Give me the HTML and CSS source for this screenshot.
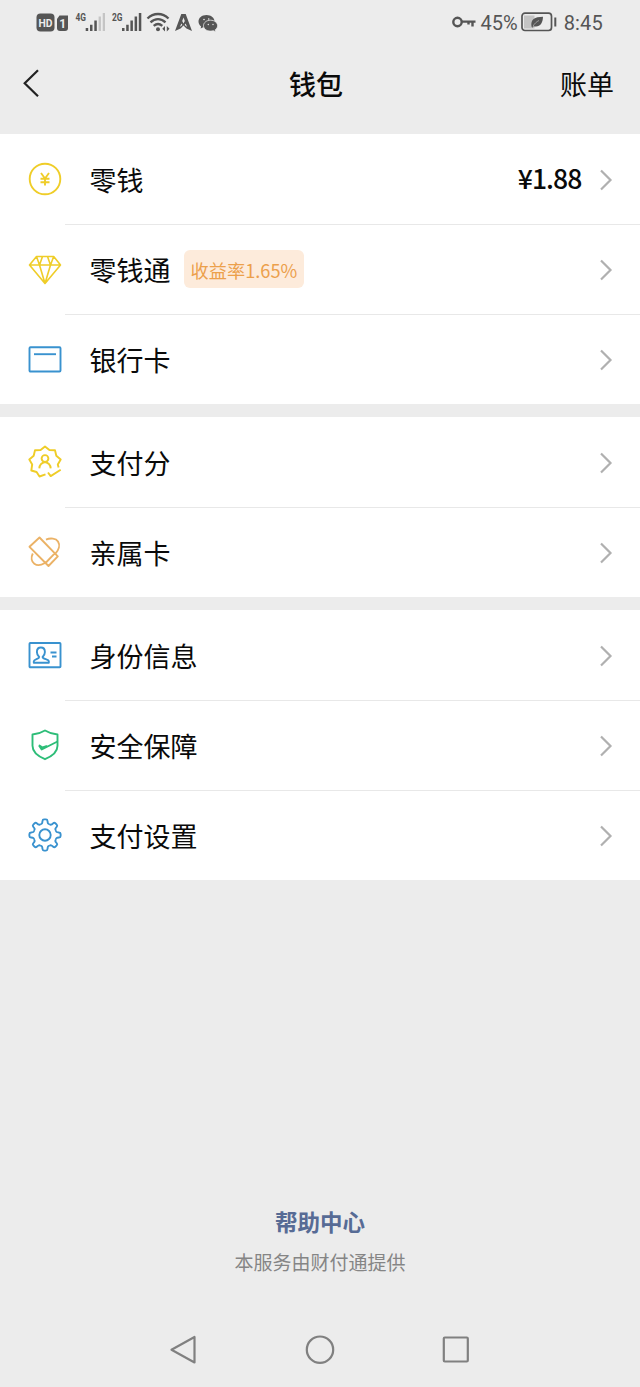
FILE: index.html
```html
<!DOCTYPE html>
<html lang="zh-CN">
<head>
<meta charset="utf-8">
<title>钱包</title>
<link rel="stylesheet" href="styles.css">
</head>
<body>
<svg class="defs" width="0" height="0">
  <symbol id="chevron" viewBox="0 0 14 22"><path d="M2 1.500 11.500 11 2 20.500" fill="none" stroke="#b0b0b0" stroke-width="2.200"/></symbol>
</svg>
<div class="screen">
  <header class="status">
    <svg class="status-left" width="184" height="24" viewBox="36 10 184 24" fill="#555">
      <rect x="36.500" y="13.500" width="18" height="18" rx="4"/>
      <text x="38.500" y="26.800" class="hd" textLength="14" lengthAdjust="spacingAndGlyphs">HD</text>
      <path d="M59.500 15.500h8.500v12.500a3 3 0 0 1-3 3h-5a3 3 0 0 1-3-3v-9z"/>
      <text x="59.300" y="27.800" class="sim">1</text>
      <text x="75.500" y="20.500" class="net" textLength="10.500" lengthAdjust="spacingAndGlyphs">4G</text>
      <path d="M85.700 28h2.500v3h-2.500zM90 24.800h2.500V31H90zM94.300 20.500h2.500V31h-2.500z"/>
      <path d="M98.600 16.500h2.300V31h-2.300zM102.700 13h2.300v18h-2.300z" fill="#c5c5c5"/>
      <text x="112" y="20.500" class="net" textLength="10.500" lengthAdjust="spacingAndGlyphs">2G</text>
      <path d="M122 28h2.500v3H122zM126.200 24.800h2.500V31h-2.500zM130.400 20.500h2.500V31h-2.500zM134.600 16.500h2.500V31h-2.500zM138.800 13h2.500v18h-2.500z"/>
      <g fill="none" stroke="#555" stroke-width="2.300"><path d="M147.500 18.500c6-6 15-6 21 0M150.500 22.300c4.500-4.300 10.500-4.300 15 0M153.700 25.800c2.700-2.300 6-2.300 8.600 0"/></g>
      <circle cx="158" cy="29.200" r="2"/>
      <path d="m165 26-2.700 2.800 2.700 2.800zM166.800 26l2.700 2.800-2.700 2.800z"/>
      <path d="M181.300 14h4.400L192 31l-5.500-2.500-3-3-3 3L175 31z"/>
      <path d="m183.500 17.500 1.300 3.500-1.300 2.500-1.300-2.500zM179.800 27l1.600-3.500 1 1.500zM187.200 27l-1.600-3.500-1 1.500z" fill="#ececec"/>
      <path d="M206.500 15c-4.700 0-8 2.900-8 6.500 0 2 1 3.700 2.600 4.900l-.5 2.200 2.600-1.300c1 .3 2 .5 3.300.5 4.700 0 8-2.900 8-6.400s-3.400-6.400-8-6.400z"/>
      <path d="M210.500 20.200c-4 0-7 2.500-7 5.500s3 5.400 7 5.400c1 0 2-.1 2.800-.4l2.500 1-.5-2c1.500-1 2.300-2.400 2.300-4 0-3-3-5.500-7.100-5.500z" stroke="#ececec" stroke-width=".8"/>
      <g fill="#ececec"><circle cx="204" cy="19.500" r=".8"/><circle cx="208.700" cy="19" r=".8"/><circle cx="208.300" cy="24.500" r=".7"/><circle cx="213" cy="24.500" r=".7"/></g>
    </svg>
    <div class="status-right">
      <svg width="24" height="14" viewBox="0 0 24 14" fill="none" stroke="#555" stroke-width="2.400"><circle cx="5.500" cy="7" r="4.200"/><path d="M9.700 6.600H23.500M20.500 6.600v4.900M16.500 6.600v3"/></svg>
      <span class="percent">45%</span>
      <svg class="battery" width="36" height="20" viewBox="0 0 36 20"><path d="M3 3.500h10.500v13H3z" fill="#c4c4c4"/><rect x="1" y="1.200" width="29.500" height="17.300" rx="3" fill="none" stroke="#555" stroke-width="1.700"/><path d="M33.300 5.500h2v9h-2z" fill="#555"/><path d="M10.500 14.500c-1-7 3-9.500 11.500-9.700-.3 7.400-3.500 10.800-9.500 9.400l-1.200 1.600z" fill="#555"/><path d="M12 14.300c1.500-2.800 3.500-4.600 6-5.800" fill="none" stroke="#ccc" stroke-width=".6"/></svg>
      <span class="time">8:45</span>
    </div>
  </header>
  <nav class="titlebar">
    <svg class="back" width="18" height="30" viewBox="0 0 18 30" fill="none" stroke="#222" stroke-width="2.200"><path d="M16 1.200 2.700 14.200l13.300 13"/></svg>
    <h1>钱包</h1>
    <span class="bill">账单</span>
  </nav>
  <main>
    <section class="group">
      <div class="row">
        <svg class="icon yellow" viewBox="0 0 34 34"><circle cx="17" cy="17" r="15.300"/><path d="m13 11 4 5.500 4-5.500M17 16.500v7M12.500 16.800h9M12.500 20.200h9"/></svg>
        <div class="cell"><span class="label">零钱</span><span class="amount">¥1.88</span><svg class="chevron"><use href="#chevron"/></svg></div>
      </div>
      <div class="row">
        <svg class="icon yellow thin" viewBox="0 0 34 34"><path d="M8.500 4.500h17.200L32.500 13 17 31.500 1.500 13zM1.500 13h31M11.500 13 17 31.500 22.500 13M8.500 4.500l3 8.500 3-8.500M19.500 4.500l3 8.500 3.200-8.500"/></svg>
        <div class="cell"><span class="label">零钱通</span><span class="tag">收益率1.65%</span><svg class="chevron"><use href="#chevron"/></svg></div>
      </div>
      <div class="row">
        <svg class="icon blue" viewBox="0 0 34 34"><rect x="1.500" y="5.300" width="31" height="24.200" rx="1"/><path d="M6 12.200h22"/></svg>
        <div class="cell"><span class="label">银行卡</span><svg class="chevron"><use href="#chevron"/></svg></div>
      </div>
    </section>
    <section class="group">
      <div class="row">
        <svg class="icon yellow" viewBox="0 0 34 34"><path d="M17.500 29.300 11.500 31.500 8.600 27 3.300 25.500 4.200 19.500 1.300 14.500 5.700 10.700 7 5.200 12.600 5 17 1.500 21.400 5 27 5.200 28.300 10.700 32.700 14.500 29.800 19.500 30.600 22.500M20 27.500l2.700 3.600 10-6.300"/><circle cx="17" cy="13.500" r="3.400"/><path d="M11.300 23.300c.3-3.500 2-5.500 5.700-6.300 3.700.8 5.400 2.800 5.700 6.300"/></svg>
        <div class="cell"><span class="label">支付分</span><svg class="chevron"><use href="#chevron"/></svg></div>
      </div>
      <div class="row">
        <svg class="icon orange" viewBox="0 0 34 34"><path d="M11.500 2.500 29.800 21.300 20.500 31 1.500 11.800zM17.500 28l9.500-9.800M18 4.600c4.500-2 10-1.300 12 1.800 2.400 3.700.8 8.700-2.800 12.500M4.800 18.500c-2 4-1.300 8.200 1.500 10.200 2.800 2 6.800 1.500 10.200-.5"/></svg>
        <div class="cell"><span class="label">亲属卡</span><svg class="chevron"><use href="#chevron"/></svg></div>
      </div>
    </section>
    <section class="group">
      <div class="row">
        <svg class="icon blue" viewBox="0 0 34 34"><rect x="1.500" y="5" width="31" height="24.200" rx=".8"/><path d="M5.800 24.800v-1.500c0-2.300 5.400-2 5.400-4.300-1.700-1.400-2.300-3.100-2.300-5 0-3 1.600-4.500 4-4.500s4 1.500 4 4.500c0 1.900-.6 3.600-2.300 5 0 2.300 6.200 2 6.200 4.300v1.500zM22.500 14.500h6M24 18.500h4.500"/></svg>
        <div class="cell"><span class="label">身份信息</span><svg class="chevron"><use href="#chevron"/></svg></div>
      </div>
      <div class="row">
        <svg class="icon green" viewBox="0 0 34 34"><path d="M17 2.500c4 2.500 8 3.600 12.500 4v11.300c0 6-5.500 10.500-12.500 13.400C10 28.300 4.500 23.800 4.500 17.800V6.500C9 6.100 13 5 17 2.500z"/><path d="m11 17.500 2.700 4L29.500 13.500M11.500 17.500l3 2 4-1.300-4.500 2.500z"/></svg>
        <div class="cell"><span class="label">安全保障</span><svg class="chevron"><use href="#chevron"/></svg></div>
      </div>
      <div class="row">
        <svg class="icon blue" viewBox="-17 -17 34 34"><defs><path id="tooth" d="M-4.600-11.100C-2.800-10.700-2.700-12.200-2.500-14c.1-1.200.7-1.600 1.500-1.600h2c.8 0 1.400.4 1.500 1.600.2 1.800.3 3.300 2.100 2.900"/></defs><circle r="5.700"/><use href="#tooth"/><use href="#tooth" transform="rotate(45)"/><use href="#tooth" transform="rotate(90)"/><use href="#tooth" transform="rotate(135)"/><use href="#tooth" transform="rotate(180)"/><use href="#tooth" transform="rotate(225)"/><use href="#tooth" transform="rotate(270)"/><use href="#tooth" transform="rotate(315)"/></svg>
        <div class="cell"><span class="label">支付设置</span><svg class="chevron"><use href="#chevron"/></svg></div>
      </div>
    </section>
  </main>
  <footer class="footer">
    <a class="help">帮助中心</a>
    <p class="provider">本服务由财付通提供</p>
  </footer>
  <div class="navkeys">
    <svg viewBox="0 0 30 30"><path d="M26.500 2v25.500L3.500 14.700z"/></svg>
    <svg viewBox="0 0 30 30"><circle cx="15" cy="14.700" r="13.200"/></svg>
    <svg viewBox="0 0 30 30"><rect x="2.800" y="2.500" width="24" height="24" rx="1"/></svg>
  </div>
</div>
</body>
</html>
```
FILE: styles.css
```css
* { box-sizing: border-box; }
body {
  margin: 0;
  background: #ececec;
  color: #0a0a0a;
  font-family: "Noto Sans CJK SC", sans-serif;
}
.defs { display: block; }
.screen {
  display: flex;
  flex-direction: column;
  height: 1387px;
  background: #ececec;
}
.status {
  display: flex;
  justify-content: space-between;
  align-items: center;
  height: 44px;
  padding: 0 37px 0 36px;
  color: #555;
}
.hd { font: bold 11.5px Roboto, sans-serif; fill: #ececec; }
.sim { font: bold 12px Roboto, sans-serif; fill: #ececec; }
.net { font: bold 11px Roboto, sans-serif; fill: #555; }
.status-right {
  display: flex;
  align-items: center;
  font: 20px/24px Roboto, sans-serif;
}
.percent { margin: 2px 3px 0 4px; }
.time { margin: 2px 0 0 7px; letter-spacing: 0.2px; }
.titlebar {
  display: grid;
  grid-template-columns: 1fr auto 1fr;
  align-items: center;
  height: 90px;
  padding: 0 26px 10px 22px;
  font-size: 27px;
  line-height: 40px;
}
.titlebar h1 {
  margin: 0 4px 0 0;
  font-size: 27px;
  font-weight: 500;
}
.bill { justify-self: end; }
main {
  display: flex;
  flex-direction: column;
  gap: 13px;
}
.group { background: #fff; }
.row {
  display: flex;
  align-items: center;
  height: 90px;
  padding-left: 27.6px;
}
.icon {
  flex: none;
  width: 34px;
  height: 34px;
  fill: none;
  stroke-width: 1.9;
  stroke-linejoin: round;
}
.icon.thin { stroke-width: 1.6; }
.yellow { stroke: #efcd28; }
.blue { stroke: #3992cf; }
.orange { stroke: #ebb266; }
.green { stroke: #2dbd78; }
.cell {
  display: flex;
  flex: 1;
  align-items: center;
  height: 90px;
  margin-left: 3px;
  padding: 0 27.5px 0 25px;
}
.row + .row .cell { box-shadow: inset 0 1px #e8e8e8; }
.label {
  padding-top: 2px;
  font-size: 27px;
  line-height: 40px;
}
.amount {
  margin-left: auto;
  padding-bottom: 2px;
  font: 500 26.5px/40px "Noto Sans CJK SC", sans-serif;
  letter-spacing: -0.9px;
}
.tag {
  height: 38px;
  margin-left: 13px;
  padding: 0 7px;
  border-radius: 6px;
  background: #fdebdb;
  color: #eca04b;
  font-size: 18.2px;
  line-height: 40px;
}
.chevron {
  width: 14px;
  height: 22px;
  margin-top: 1px;
  margin-left: auto;
}
.amount + .chevron { margin-left: 17px; }
.footer {
  margin-top: auto;
  text-align: center;
}
.help {
  display: block;
  color: #576b95;
  font-size: 22.5px;
  font-weight: 700;
  line-height: 34px;
}
.provider {
  margin: 10px 0 0;
  color: #858585;
  font-size: 19px;
  line-height: 28px;
}
.navkeys {
  display: flex;
  justify-content: space-between;
  align-items: center;
  height: 75px;
  margin-top: 36px;
  padding: 0 169px 0 168px;
  flex: none;
}
.navkeys svg {
  width: 30px;
  height: 30px;
  fill: none;
  stroke: #808080;
  stroke-width: 2.2;
  stroke-linejoin: round;
}
```
